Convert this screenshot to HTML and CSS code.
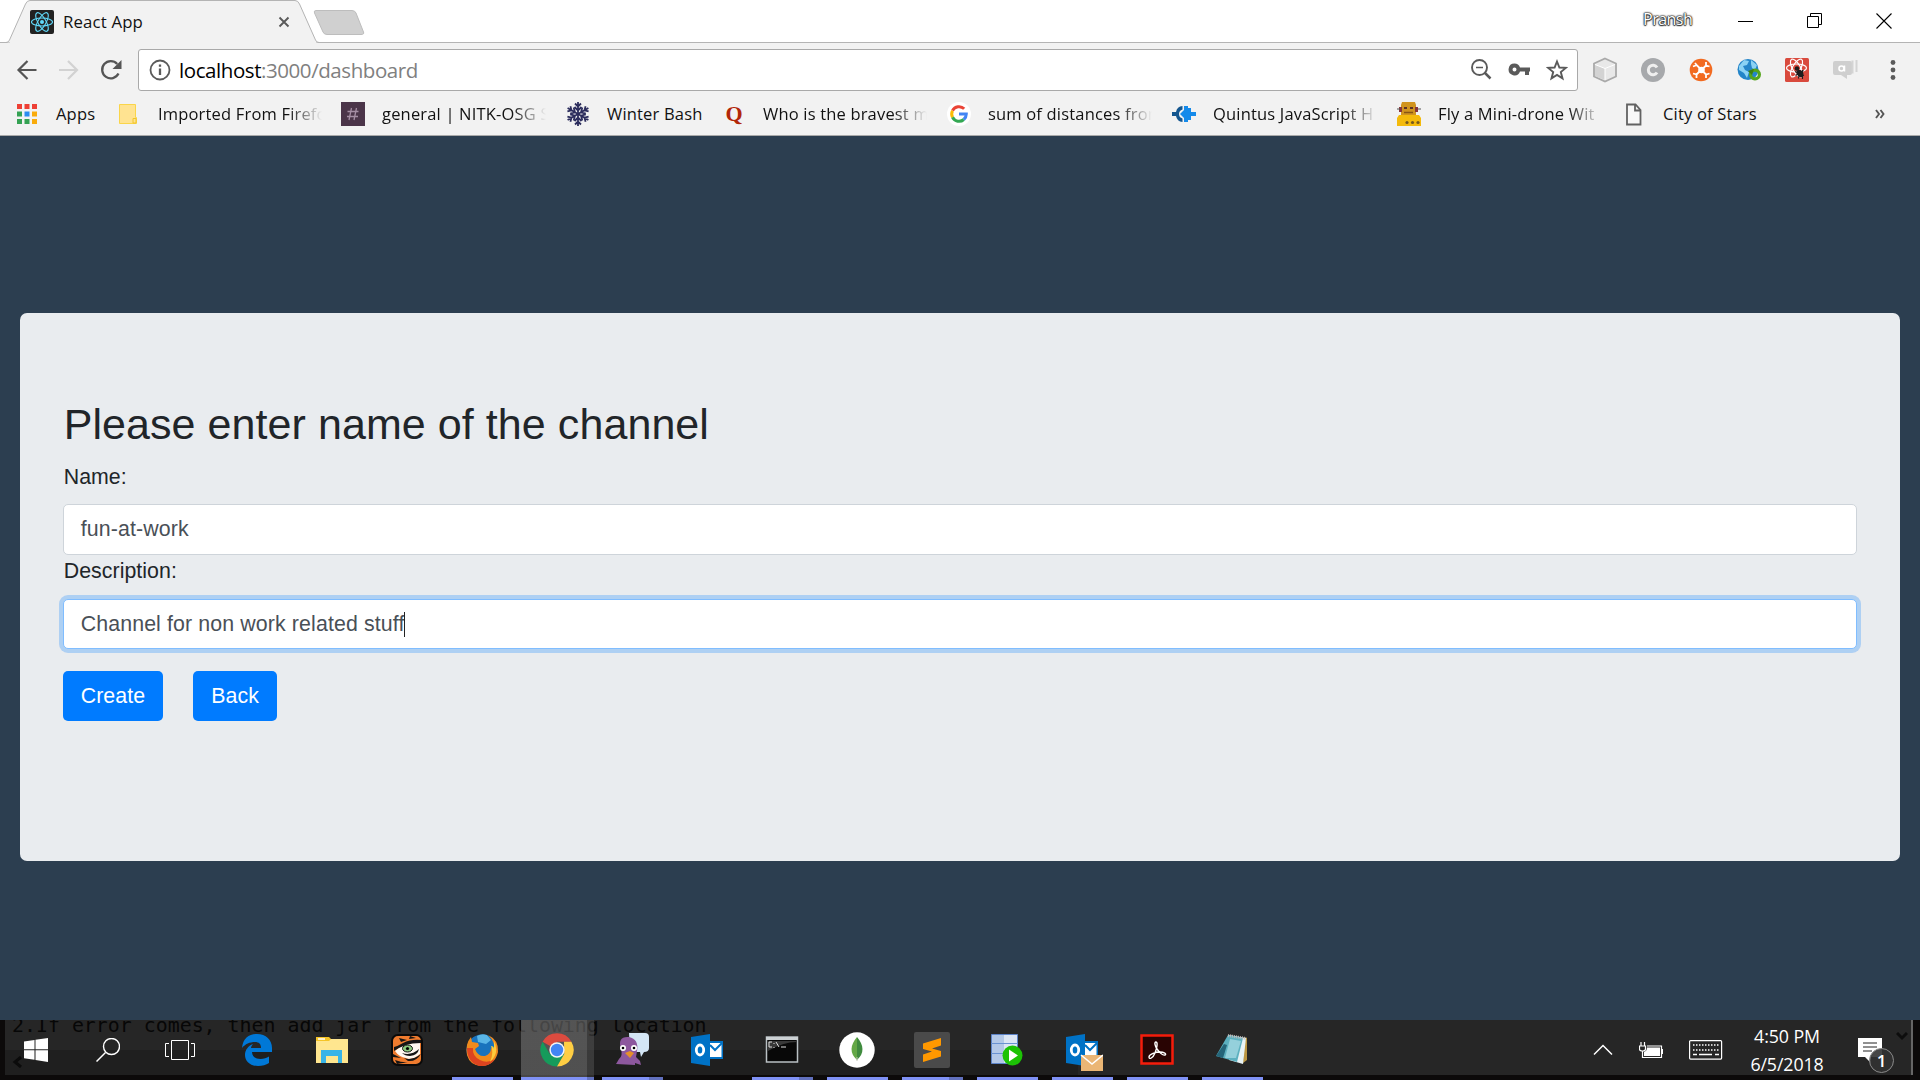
FILE: index.html
```html
<!DOCTYPE html>
<html lang="en">
<head>
<meta charset="utf-8">
<title>React App</title>
<link rel="stylesheet" href="styles.css">
</head>
<body>
<div class="screen">
  <header class="tabstrip">
    <svg class="tab-shape" width="372" height="43" viewBox="0 0 372 43">
      <path d="M0 42.5H6Q8.500 42.500 9.500 40L25.500 4Q27 .5 30 .5H295Q298 .5 299.500 4L315.500 40Q316.500 42.500 319 42.500H372" fill="#f2f2f2" stroke="#b4b4b4"/>
      <path d="M316 10.500H352Q355 10.500 356 13L363.500 32Q364.500 34.500 361 34.500H327Q324 34.500 323 32L314.500 13Q313.500 10.500 316 10.500Z" fill="#d0d0d0" stroke="#bdbdbd"/>
      <path d="M10 42.500H316" stroke="#f2f2f2"/>
    </svg>
    <div class="tab">
      <svg width="24" height="24" viewBox="0 0 24 24"><rect width="24" height="24" rx="2" fill="#222"/><g fill="none" stroke="#61dafb" stroke-width="1.100"><ellipse cx="12" cy="12" rx="10.500" ry="4"/><ellipse cx="12" cy="12" rx="10.500" ry="4" transform="rotate(60 12 12)"/><ellipse cx="12" cy="12" rx="10.500" ry="4" transform="rotate(120 12 12)"/></g><circle cx="12" cy="12" r="2" fill="#61dafb"/></svg>
      <span class="tab-title">React App</span>
      <svg class="tab-close" width="12" height="12" viewBox="0 0 12 12"><path d="M1.500 1.500l9 9m0-9l-9 9" stroke="#5a5a5a" stroke-width="1.900"/></svg>
    </div>
    <div class="window-controls">
      <span class="profile">Pransh</span>
      <svg width="16" height="16" viewBox="0 0 16 16"><path d="M0 8.500h15" stroke="#000"/></svg>
      <svg width="16" height="16" viewBox="0 0 16 16"><path d="M.5 3.500h11v11H.5zM3.500 3.500v-3h11v11h-3" fill="none" stroke="#000"/></svg>
      <svg width="16" height="16" viewBox="0 0 16 16"><path d="M.5.5l15 15m0-15l-15 15" stroke="#000" stroke-width="1.100"/></svg>
    </div>
  </header>

  <div class="toolbar">
    <svg width="22" height="22" viewBox="0 0 22 22"><path d="M20.500 11H2.500M11.500 2L2.500 11l9 9" fill="none" stroke="#555" stroke-width="2.200"/></svg>
    <svg width="22" height="22" viewBox="0 0 22 22"><path d="M1 11h18M10 2l9 9-9 9" fill="none" stroke="#d2d2d2" stroke-width="2.200"/></svg>
    <svg width="22" height="22" viewBox="0 0 22 22"><path d="M18.500 14.500A8.600 8.600 0 1 1 17.200 5" fill="none" stroke="#555" stroke-width="2.300"/><path d="M21.500 1v9h-9z" fill="#555"/></svg>
    <div class="address">
      <svg width="22" height="22" viewBox="0 0 22 22"><circle cx="11" cy="11" r="9.500" fill="none" stroke="#5a5a5a" stroke-width="1.800"/><path d="M11 9.500V16M11 5.500v2.300" stroke="#5a5a5a" stroke-width="2.300"/></svg>
      <span class="url">localhost<span class="url-rest">:3000/dashboard</span></span>
      <div class="address-actions">
        <svg width="22" height="22" viewBox="0 0 22 22"><g fill="none" stroke="#5a5a5a"><circle cx="9.500" cy="8.500" r="7.500" stroke-width="1.900"/><path d="M14.500 13.500l6 6" stroke-width="2.500"/><path d="M6 8.500h7" stroke-width="1.500"/></g></svg>
        <svg width="22" height="22" viewBox="0 0 22 22"><path d="M6.500 4.500a5.900 5.900 0 1 0 5.500 8h5V16h4v-3.500h1v-4H12A5.900 5.900 0 0 0 6.500 4.500zm0 4a2 2 0 1 1 0 4 2 2 0 0 1 0-4z" fill="#5a5a5a" fill-rule="evenodd"/></svg>
        <svg width="22" height="22" viewBox="0 0 22 22"><path d="M11 2.500l2.400 6 6.400.4-5 4.200 1.700 6.300L11 15.900l-5.500 3.500 1.700-6.300-5-4.200 6.400-.4z" fill="none" stroke="#5a5a5a" stroke-width="1.900"/></svg>
      </div>
    </div>
    <div class="extensions">
      <svg width="26" height="26" viewBox="0 0 26 26"><path d="M13 1.500l11 5v13l-11 5-11-5v-13z" fill="#e8e8e8" stroke="#a9a9a9" stroke-width="1.800"/><path d="M3 7.500L13 11.500V23l-10-4z" fill="#d3d3d3"/><path d="M3 7.500L13 11.500 23 7.500M13 11.500V23" fill="none" stroke="#fff"/></svg>
      <svg width="26" height="26" viewBox="0 0 26 26"><circle cx="13" cy="13" r="12" fill="#a7a9ac"/><path d="M17 10.500a4.700 4.700 0 1 0 0 5" fill="none" stroke="#efefef" stroke-width="3"/></svg>
      <svg width="26" height="26" viewBox="0 0 26 26"><circle cx="13" cy="13" r="11.300" fill="#f26b21"/><circle cx="13.500" cy="13" r="3.300" fill="#fff"/><path d="M5 9.500l4-1.500M7 6l2 2.500 3 3M18 5v3.500l3.500 1M18 8.500L15 11.500M5 16.500l3.500 1V21M8.500 17.500l3-3M15 14.500l3 3 3.500-1M18 17.500V21" fill="none" stroke="#fff" stroke-width="1.800"/></svg>
      <svg width="26" height="26" viewBox="0 0 26 26"><circle cx="12" cy="12.500" r="10.500" fill="#2485c9"/><path d="M3 9l5-6 5 1-2 4-4 1 2 4 4 2-2 6-3-5-5-3zM15 3l6 5-2 5-3-2-1-4z" fill="#8bd2f4"/><circle cx="19" cy="17.500" r="4.400" fill="none" stroke="#55a51c" stroke-width="3.200"/><path d="M12 14l6-2-2 6z" fill="#3c7e10"/></svg>
      <svg width="26" height="26" viewBox="0 0 26 26"><rect x="1" y="1" width="24" height="24" rx="1.500" fill="#d94a3d"/><g fill="none" stroke="#fff" stroke-width="1.200"><ellipse cx="12.500" cy="11" rx="10" ry="4"/><ellipse cx="12.500" cy="11" rx="10" ry="4" transform="rotate(60 12.500 11)"/><ellipse cx="12.500" cy="11" rx="10" ry="4" transform="rotate(120 12.500 11)"/></g><circle cx="13" cy="11.500" r="2.300" fill="#1d1d1d"/><ellipse cx="16" cy="16.500" rx="3" ry="4" transform="rotate(-35 16 16.500)" fill="#1d1d1d"/><path d="M11 14.500l9 4M11.500 18.500l8-5M14.500 21.500l1-6M18.500 13v9" stroke="#1d1d1d" stroke-width="1.100"/></svg>
      <svg width="26" height="26" viewBox="0 0 26 26"><path d="M3 4h15q2 0 2 2v10q0 2-2 2h-3v4l-6-4H3q-2 0-2-2V6q0-2 2-2z" fill="#cfcfcf"/><path d="M20.500 3.500v13M24.500 3v12" stroke="#d4d4d4" stroke-width="2"/><circle cx="9.500" cy="11.500" r="2.500" fill="none" stroke="#fff" stroke-width="1.600"/><path d="M12.500 8.500V14.500" stroke="#fff" stroke-width="1.500"/></svg>
      <svg class="menu-dots" width="6" height="22" viewBox="0 0 6 22"><g fill="#5a5a5a"><circle cx="3" cy="3.500" r="2.400"/><circle cx="3" cy="11" r="2.400"/><circle cx="3" cy="18.500" r="2.400"/></g></svg>
    </div>
  </div>

  <nav class="bookmarks">
    <div class="bookmark"><svg width="24" height="24" viewBox="0 0 24 24"><path d="M2 2h5v5H2zM9.500 2h5v5h-5zM17 2h5v5h-5z" fill="#ee4035"/><path d="M2 9.500h5v5H2zM2 17h5v5H2zM9.500 17h5v5h-5z" fill="#34a253"/><path d="M9.500 9.500h5v5h-5z" fill="#2a8cf0"/><path d="M17 9.500h5v5h-5zM17 17h5v5h-5z" fill="#f9ab0b"/></svg><span class="label">Apps</span></div>
    <div class="bookmark"><svg width="24" height="24" viewBox="0 0 24 24"><path d="M2.500 2.500h16v13h1v6h-17z" fill="#ffe391" stroke="#fad54a"/><path d="M16 21v-4.500h3v4.500z" fill="#ffe391" stroke="#f0c52d"/></svg><span class="label faded">Imported From Firefo</span></div>
    <div class="bookmark"><svg width="24" height="24" viewBox="0 0 24 24"><path d="M0 0h24v24H0z" fill="#4b3549"/><path d="M10.500 6l-2.500 12M15.500 6L13 18M6.500 9.500h11M6 14.500h11" stroke="#a58ea4" stroke-width="1.300"/></svg><span class="label faded">general | NITK-OSG S</span></div>
    <div class="bookmark"><svg width="24" height="24" viewBox="0 0 24 24"><g fill="none" stroke="#2c2d5d" stroke-width="1.800"><path id="arm" d="M12 12V0M9 1.500l3 3L15 1.500M8.500 5l3.500 3.500L15.500 5"/><use href="#arm" transform="rotate(60 12 12)"/><use href="#arm" transform="rotate(120 12 12)"/><use href="#arm" transform="rotate(180 12 12)"/><use href="#arm" transform="rotate(240 12 12)"/><use href="#arm" transform="rotate(300 12 12)"/></g></svg><span class="label">Winter Bash</span></div>
    <div class="bookmark"><span class="quora">Q</span><span class="label faded">Who is the bravest m</span></div>
    <div class="bookmark"><svg width="24" height="24" viewBox="0 0 24 24"><circle cx="12" cy="12" r="12" fill="#fff"/><g fill="none" stroke-width="3"><path d="M17.200 6.800A7.300 7.300 0 0 0 5.500 8.700" stroke="#ea4335"/><path d="M5.500 8.700a7.300 7.300 0 0 0 0 6.600" stroke="#fbbc05"/><path d="M5.500 15.300a7.300 7.300 0 0 0 11.300 2.200" stroke="#34a853"/><path d="M16.800 17.500A7.300 7.300 0 0 0 19.300 12H12" stroke="#4285f4"/></g></svg><span class="label faded">sum of distances from</span></div>
    <div class="bookmark"><svg width="24" height="24" viewBox="0 0 24 24"><path d="M10.500 4Q5 4.500 4 10H0v4h4q1 5.500 6.500 6v-3.500Q7 15.500 7 12t3.500-4.500z" fill="#14568f"/><path d="M12 4h4v2h3v4h5v4h-5v4h-3v2h-4v-4l-4-4 4-4z" fill="#158aea"/></svg><span class="label faded">Quintus JavaScript H</span></div>
    <div class="bookmark"><svg width="24" height="24" viewBox="0 0 24 24"><path d="M5 0h13l1 3v10H4V3z" fill="#d1941e"/><path d="M2 5h3v5H2zM18 5h3v5h-3z" fill="#87363c"/><path d="M0 7h3M21 7h3" stroke="#555"/><path d="M7 5h3v2H7zM13 5h3v2h-3z" fill="#5b3327"/><path d="M7 10.500h9" stroke="#875514" stroke-width="1.500"/><path d="M2 13h20l2 3v8H0v-8z" fill="#f4ba0b"/><g fill="#76591e"><circle cx="10" cy="20.500" r="1.600"/><circle cx="15.500" cy="20.500" r="1.600"/><circle cx="21" cy="20.500" r="1.600"/></g></svg><span class="label faded">Fly a Mini-drone Wit</span></div>
    <div class="bookmark"><svg width="24" height="24" viewBox="0 0 24 24"><path d="M5 2.500h8.500l5 5.500v14.500H5zM13 2.500V8.500h5.500" fill="#f8f8f8" stroke="#626262" stroke-width="1.800"/></svg><span class="label">City of Stars</span></div>
    <svg class="overflow" width="10" height="10" viewBox="0 0 10 10"><path d="M1 1l3 4-3 4M5.500 1l3 4-3 4" fill="none" stroke="#555" stroke-width="1.900"/></svg>
  </nav>

  <main class="page">
    <form class="panel">
      <h2>Please enter name of the channel</h2>
      <div class="field-label">Name:</div>
      <div class="field">fun-at-work</div>
      <div class="field-label">Description:</div>
      <div class="field focused">Channel for non work related stuff<i class="caret"></i></div>
      <div class="actions"><button type="button">Create</button><button type="button">Back</button></div>
    </form>
  </main>

  <footer class="taskbar">
    <div class="backdrop">
      <div class="backdrop-low"></div>
      <div class="backdrop-text">2.If error comes, then add jar from the following location</div>
      <svg class="backdrop-left" width="12" height="12" viewBox="0 0 12 12"><path d="M9 1L3 6l6 5" fill="none" stroke="#0b0b0b" stroke-width="3"/></svg>
      <svg class="backdrop-down" width="12" height="12" viewBox="0 0 12 12"><path d="M1 3l5 5 5-5" fill="none" stroke="#0d0d0d" stroke-width="3"/></svg>
    </div>
    <div class="system">
      <svg width="24" height="24" viewBox="0 0 24 24"><path d="M0 3.500L10.500 2v9.300H0zM11.500 1.800L24 0v11.300H11.500zM0 12.300h10.500v9.500L0 20.300zM11.500 12.300H24V24l-12.500-1.900z" fill="#fff"/></svg>
      <svg width="24" height="24" viewBox="0 0 24 24"><path d="M9.500 14.500L.5 23.500" stroke="#fff" stroke-width="1.500"/><circle cx="15.500" cy="8.500" r="8" fill="none" stroke="#fff" stroke-width="1.400"/></svg>
      <svg width="30" height="20" viewBox="0 0 30 20"><path d="M6.500.5h17v19h-17zM4 3.500H.5v13H4M26 3.500h3.500v13H26" fill="none" stroke="#fff"/></svg>
    </div>
    <div class="apps">
      <div class="app"><svg width="32" height="34" viewBox="0 0 32 34"><path d="M1 15C2 5 8 1 16 1c9 0 15 6 15 14v4H11c.3 5 4 7 8.500 7 3.500 0 6-1 8.500-2.500V30c-3 2-6.500 3-11 3C9 33 4 28 4 22c0-5 3-9 8-11-1 1-2 3-2 4h10c0-4-2-6-6-6-5 0-10 2-13 6z" fill="#0078d7"/></svg></div>
      <div class="app"><svg width="34" height="34" viewBox="0 0 34 34"><path d="M1 4h12l2 2h18v24H1z" fill="#ffe68f"/><path d="M1 4h13l2 2-2 2H1z" fill="#f5c427"/><path d="M3 6h7" stroke="#fff" stroke-width="1.500"/><path d="M6 17h21v13h-4v-7H11v7H6z" fill="#38b4e7"/></svg></div>
      <div class="app"><svg width="34" height="34" viewBox="0 0 34 34"><rect x="2" y="2" width="30" height="30" rx="6" fill="#ef7b2e" stroke="#0a0a0a" stroke-width="2"/><path d="M5 18q7-8 25-9v12q-8 7-14 4-7-1-11-7z" fill="#fff8f0"/><path d="M4 14q4-1 9-4 8-4 18-3v3q-9 0-15 2-6 2-12 6zM9 5l8 2-6 2zM20 3l6 2-7 1zM12 20q9 3 17-4-1 6-9 7-5 0-8-3zM14 25q8 3 17-4-5 8-13 7zM3 21l8 4-8-1zM5 27q8 3 14 2l-12 2z" fill="#151515"/><ellipse cx="17.500" cy="15.500" rx="5" ry="3.500" fill="#8ac97e" stroke="#111"/><circle cx="17.500" cy="15.500" r="1.600"/></svg></div>
      <div class="app running"><svg width="34" height="34" viewBox="0 0 34 34"><circle cx="17" cy="17" r="15.500" fill="#1973bd"/><path d="M12 3q5-3 10-1l4 5-5 4-8-2z" fill="#59b5e6"/><path d="M23 2q11 5 10 17-3 13-16 14Q5 33 2 22 0 11 6 4l1 5 6 1 1 3-4 3q3 8 10 7 6-2 6-8 3 1 3 4 2-10-6-17z" fill="#f18a1c"/><path d="M2 15q0 14 12 18 11 1 16-7-8 5-15 1-8-4-7-12z" fill="#dd4420"/><path d="M29 8q6 12-4 21 4-9 1-16 3 0 3 3z" fill="#ffcc3c"/></svg></div>
      <div class="app running active"><svg width="34" height="34" viewBox="0 0 34 34"><path d="M17 17L2.600 8.700A16.600 16.600 0 0 1 31.400 8.700H17z" fill="#dc4b3f"/><path d="M2.600 8.700A16.600 16.600 0 0 0 17 33.600L24.200 21 17 17 9.800 21z" fill="#169b5b"/><path d="M17 33.600L24.200 21 24 8.700h7.400A16.600 16.600 0 0 1 17 33.600z" fill="#ffce43"/><circle cx="17" cy="17" r="7.700" fill="#f5f5f5"/><circle cx="17" cy="17" r="6.200" fill="#4285f4"/></svg></div>
      <div class="app running stacked"><svg width="36" height="34" viewBox="0 0 36 34"><path d="M15 0h16q4 0 4 4v11q0 4-5 4l-3 5-1-5H16z" fill="#d4e6f5"/><path d="M2 31l3-5q4-3 2-10Q3 3 15 4q10 2 8 14l-1 6 4 4 1 4-6-2v2z" fill="#8d589e"/><circle cx="9" cy="15" r="3" fill="#fff"/><circle cx="20" cy="15" r="3" fill="#fff"/><circle cx="9" cy="15" r="1.300"/><circle cx="20" cy="15" r="1.300"/><path d="M11 20l5-2 4 2-4 5z" fill="#e5902a"/></svg></div>
      <div class="app"><svg width="34" height="34" viewBox="0 0 34 34"><g id="outlook"><path d="M18 8h15v18H18z" fill="#0072c6"/><path d="M20 10h11.500v14H20z" fill="#fff"/><path d="M20 12l5 5 7-7" fill="none" stroke="#0072c6" stroke-width="2"/><path d="M1 4l19-3v32L1 30z" fill="#0072c6"/><ellipse cx="10" cy="17" rx="3.700" ry="5" fill="none" stroke="#fff" stroke-width="2.800"/></g></svg></div>
      <div class="app running stacked"><svg width="34" height="34" viewBox="0 0 34 34"><path d="M1.500 4h31v25h-31z" fill="#080808" stroke="#b9c0c4" stroke-width="1.500"/><path d="M1 4h32v3H1z" fill="#ccd1d4"/><path d="M3 18Q18 9 32 9V8H3z" fill="#383838"/><path d="M7 9H4v5h3M9 10v1m0 3v1M11 9l3 5M16 14h5" fill="none" stroke="#ddd"/></svg></div>
      <div class="app running"><svg width="36" height="36" viewBox="0 0 36 36"><circle cx="18" cy="18" r="17.700" fill="#fff"/><path d="M18 5q11 13 0 23z" fill="#3f8b3e"/><path d="M18 5q-11 13 0 23z" fill="#64a846"/><path d="M18 25v4" stroke="#c1c7b4"/></svg></div>
      <div class="app running stacked"><svg width="36" height="36" viewBox="0 0 36 36"><rect width="36" height="36" rx="2" fill="#4a4a4a"/><path d="M9 11.500l18-5.500v7.500L18 16.500l9 2.500v5.500L9 30v-7.500l9-3-9-2.500z" fill="#ff9800"/></svg></div>
      <div class="app running"><svg width="34" height="34" viewBox="0 0 34 34"><path d="M1.500 1.500h26v29h-26z" fill="#dce6f5" stroke="#5c83c8"/><path d="M2 2h12v28H2z" fill="#b3c8e8"/><path d="M1 10.500h27M1 20.500h27" stroke="#6992d2"/><circle cx="22.500" cy="22.500" r="10" fill="#1cc205"/><path d="M19 16.500v12l9-6z" fill="#fff"/></svg></div>
      <div class="app running"><svg class="outlook-mail" width="38" height="38" viewBox="0 0 38 38"><use href="#outlook"/><path d="M16 22h22v16H16z" fill="#ebb675"/><path d="M16 22l11 9 11-9" fill="none" stroke="#fff" stroke-width="1.600"/></svg></div>
      <div class="app running"><svg width="34" height="32" viewBox="0 0 34 32"><path d="M1.500 1.500h31v28h-31z" fill="#290403" stroke="#f51c0b" stroke-width="2.500"/><path d="M16 8c-2 0-1 4 1 7s6 7 8 6-1-3-5-3-11 2-11 5 4 1 6-4 3-11 1-11z" fill="none" stroke="#fff" stroke-width="1.400"/></svg></div>
      <div class="app running"><svg width="34" height="34" viewBox="0 0 34 34"><path d="M29 4l3 1v22l-4 3z" fill="#bb9642"/><path d="M14 2l17 3-3 26-14-4z" fill="#e8f3f6"/><path d="M13 2l15 3-6 24L1 23z" fill="#5cb0bf"/><path d="M9 11l3 1-4 13-7-2z" fill="#256579"/><path d="M15 6l11 2-5 17H10z" fill="#94d0db"/><path d="M13 2.500l18 3" stroke="#bbb" stroke-width="3" stroke-dasharray="1 1"/></svg></div>
    </div>
    <div class="tray">
      <svg width="20" height="12" viewBox="0 0 20 12"><path d="M1 10.500l9-9 9 9" fill="none" stroke="#fff" stroke-width="1.500"/></svg>
      <svg width="24" height="17" viewBox="0 0 24 17"><path d="M2 0v4m3.500-4v4M.5 4h6v3q0 2-3 2t-3-2zM3.500 9v6.500H22.500V4H8" fill="none" stroke="#fff" stroke-width="1.200"/><path d="M8 5.500h13V14H5v-4q3-1 3-4.500z" fill="#fff"/><path d="M23.500 7v5" stroke="#fff"/></svg>
      <svg width="34" height="20" viewBox="0 0 34 20"><rect x=".6" y=".6" width="32" height="18.500" rx="1" fill="none" stroke="#fff" stroke-width="1.200"/><path d="M4 5h26M4 10h26" stroke="#fff" stroke-width="1.400" stroke-dasharray="1.500 1.500"/><path d="M4 14.500h4m2 0h13m3 0h4" stroke="#fff" stroke-width="1.400"/></svg>
      <div class="clock"><span class="time">4:50 PM</span><span class="date">6/5/2018</span></div>
      <div class="notifications"><svg width="24" height="25" viewBox="0 0 24 25"><path d="M0 0h24v19H13v6l-6-6H0z" fill="#fff"/><path d="M5 5h14M5 9h14M5 13h9" stroke="#222"/></svg><span class="badge">1</span></div>
    </div>
  </footer>
</div>
</body>
</html>
```
FILE: styles.css
```css
* { box-sizing: border-box; }
body { margin: 0; overflow: hidden; font-family: "Open Sans", "Noto Sans", sans-serif; }
svg { display: block; flex: none; }
.screen { width: 1920px; height: 1080px; display: flex; flex-direction: column; background: #2c3e50; }

.tabstrip { position: relative; height: 43px; flex: none; display: flex; background: linear-gradient(#b4b4b4, #b4b4b4) 0 42px / 100% 1px no-repeat #fff; }
.tab-shape { position: absolute; left: 0; top: 0; }
.tab { position: relative; width: 319px; height: 44px; padding-left: 30px; display: flex; align-items: center; }
.tab-title { margin-left: 9px; margin-top: -2px; font-size: 16.800px; letter-spacing: .15px; color: #111; }
.tab-close { margin-left: auto; margin-right: 29px; }
.window-controls { margin-left: auto; height: 41px; padding-right: 28px; display: flex; align-items: center; gap: 53px; }
.profile { margin-right: -10px; width: 52px; font-size: 16px; line-height: 38px; height: 41px; letter-spacing: -.5px; color: #fff; text-shadow: 0 0 2px #222, 0 0 2px #222, 0 0 1px #222, 0 0 1px #222, 0 1px 1px #444; }

.toolbar { height: 54px; flex: none; padding: 0 24px 0 16px; display: flex; align-items: center; background: #f2f2f2; gap: 20px; }
.address { width: 1440px; height: 42px; margin-left: -4px; padding: 0 9px 0 10px; display: flex; align-items: center; border: 1px solid #a9a9a9; border-radius: 3px; background: #fff; }
.url { margin-left: 8px; font-size: 20.500px; letter-spacing: -.43px; color: #000; }
.url-rest { color: #808080; }
.address-actions { margin-left: auto; display: flex; gap: 16px; }
.extensions { flex: 1; margin-left: -6px; display: flex; align-items: center; gap: 22px; }
.menu-dots { margin-left: auto; }

.bookmarks { height: 39px; flex: none; padding: 0 35px 5px 15px; display: grid; grid-template-columns: 102px 224px 225px 156px 225px 225px 225px 225px 1fr auto; align-items: center; background: #f2f2f2; border-bottom: 1px solid #a9a9a9; }
.bookmark { display: flex; align-items: center; gap: 17px; }
.label { font-size: 16.500px; line-height: 24px; white-space: nowrap; color: #111; letter-spacing: .18px; }
.faded { width: 164px; overflow: hidden; mask-image: linear-gradient(90deg, #000 130px, transparent 164px); }
.quora { width: 24px; text-align: center; font: bold 22px/24px "Liberation Serif", serif; color: #b22708; }

.page { flex: 1; padding: 177px 20px 0; }
.panel { height: 547.700px; padding: 86px 42.700px; border-radius: 7px; background: #e9ecef; font-family: "Liberation Sans", Arial, sans-serif; font-size: 21.330px; color: #212529; }
h2 { margin: 0 0 10.700px; padding-left: 1px; font-size: 43px; font-weight: 400; line-height: 51.200px; letter-spacing: .07px; }
.field-label { height: 43.500px; line-height: 32px; padding-left: 1px; letter-spacing: .05px; }
.field { height: 50.700px; padding: 8px 17px; border: 1px solid #ced4da; border-radius: 5px; line-height: 32px; letter-spacing: .12px; background: #fff; color: #495057; }
.focused { border-color: #80bdff; box-shadow: 0 0 0 4px rgba(0, 123, 255, .25); }
.caret { display: inline-block; width: 1px; height: 25px; vertical-align: -6px; background: #222; }
.actions { margin-top: 21.300px; display: flex; gap: 30px; }
button { height: 50.700px; padding: 1px 18px 0; border: 0; border-radius: 5px; font: inherit; letter-spacing: .08px; color: #fff; background: #007bff; }

.taskbar { position: relative; height: 60px; flex: none; display: flex; background: #0c0a0a; }
.backdrop { position: absolute; left: 5px; top: 0; width: 1908px; height: 55px; overflow: hidden; background: #262626; border-right: 2px solid #666; }
.backdrop-low { position: absolute; left: 0; top: 30px; width: 1073px; height: 25px; background: #1f1f1f; }
.backdrop-text { position: absolute; left: 7px; top: -6px; font: 19.900px/24px "DejaVu Sans Mono", monospace; white-space: pre; color: #070707; }
.backdrop-left { position: absolute; left: 7px; top: 36px; }
.backdrop-down { position: absolute; right: 3px; top: 10px; }
.system { position: relative; width: 226px; padding-left: 24px; display: flex; align-items: center; gap: 48px; }
.system svg:last-child { margin-left: -3px; }
.apps { position: relative; display: flex; gap: 14px; }
.app { position: relative; width: 61px; height: 60px; display: flex; align-items: center; justify-content: center; }
.app svg { position: relative; }
.running::after { content: ""; position: absolute; left: 1px; right: -1px; bottom: 0; height: 3px; background: #7f91f5; }
.stacked::after { background: linear-gradient(90deg, #7f91f5 47px, #6170bd 47px); }
.active::before { content: ""; position: absolute; left: -5px; top: 0; width: 73px; height: 60px; background: linear-gradient(90deg, rgba(130, 130, 130, .5) 66px, rgba(95, 95, 95, .42) 66px); }
.active::after { left: -5px; right: -7px; background: linear-gradient(90deg, #7f91f5 66px, #6170bd 66px); }
.outlook-mail { left: 2px; top: 2px; }
.tray { position: relative; margin-left: auto; padding-right: 38px; display: flex; align-items: center; color: #fff; }
.tray > svg { margin-left: -1px; }
.tray > svg + svg { margin-left: 26px; }
.clock { width: 92px; margin: 0 25px 0 18px; display: flex; flex-direction: column; align-items: center; font-size: 17.800px; line-height: 28px; letter-spacing: -.1px; }
.notifications { position: relative; }
.badge { position: absolute; left: 11px; top: 10px; width: 25px; height: 25px; border: 1px solid #8a8a8a; border-radius: 50%; background: rgba(50, 50, 50, .9); font-size: 17px; font-weight: 600; line-height: 23px; text-align: center; }
```
